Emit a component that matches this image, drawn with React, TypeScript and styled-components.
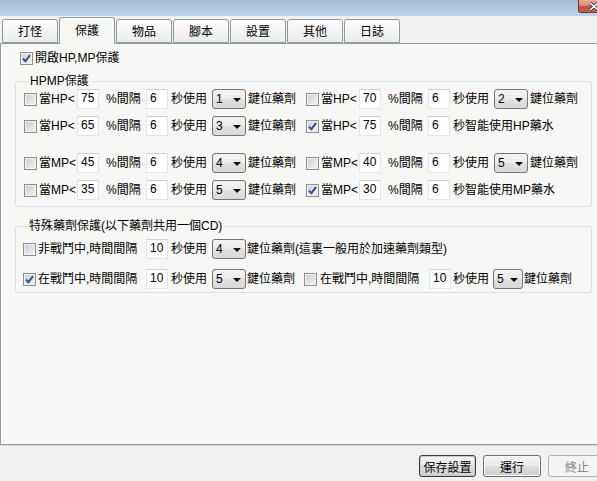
import React from "react";
import styled, { createGlobalStyle } from "styled-components";

const GlobalStyle = createGlobalStyle`
  html, body {
    margin: 0;
    padding: 0;
    background: #f0f0f0;
  }
  body {
    width: 597px;
    height: 481px;
    overflow: hidden;
    font-family: "Liberation Sans", "Noto Sans CJK TC", sans-serif;
    font-size: 12px;
    color: #000;
  }
`;

type Threshold = {
  label: string;
  pct: string;
  sec: string;
  slot?: string;
  smart?: string;
  checked?: boolean;
};

const tabs = ["打怪", "保護", "物品", "腳本", "設置", "其他", "日誌"];

const hpRows: Threshold[][] = [
  [
    { label: "當HP<", pct: "75", sec: "6", slot: "1" },
    { label: "當HP<", pct: "70", sec: "6", slot: "2" },
  ],
  [
    { label: "當HP<", pct: "65", sec: "6", slot: "3" },
    { label: "當HP<", pct: "75", sec: "6", smart: "秒智能使用HP藥水", checked: true },
  ],
];

const mpRows: Threshold[][] = [
  [
    { label: "當MP<", pct: "45", sec: "6", slot: "4" },
    { label: "當MP<", pct: "40", sec: "6", slot: "5" },
  ],
  [
    { label: "當MP<", pct: "35", sec: "6", slot: "5" },
    { label: "當MP<", pct: "30", sec: "6", smart: "秒智能使用MP藥水", checked: true },
  ],
];

const CheckMark = () => (
  <svg width="9" height="9" viewBox="0 0 9 9">
    <path d="M1 4.6 L3.4 7.2 L8 1.2" fill="none" stroke="#2c4f96" strokeWidth="1.9" />
  </svg>
);

const Check = ({ checked }: { checked?: boolean }) => (
  <CheckBox>{checked && <CheckMark />}</CheckBox>
);

const Combo = ({ value, w }: { value: string; w?: number }) => (
  <ComboBox $w={w}>
    <span>{value}</span>
    <Arrow />
  </ComboBox>
);

const ThresholdHalf = ({ row }: { row: Threshold }) => (
  <Half $w={282}>
    <Check checked={row.checked} />
    <Text $w={39} $pl={1}>{row.label}</Text>
    <NumBox readOnly value={row.pct} />
    <Text $w={47} $pl={7}>%間隔</Text>
    <NumBox readOnly value={row.sec} />
    {row.smart ? (
      <Text $pl={3}>{row.smart}</Text>
    ) : (
      <>
        <Text $w={44} $pl={3}>秒使用</Text>
        <Combo value={row.slot ?? ""} />
        <Text $pl={2}>鍵位藥劑</Text>
      </>
    )}
  </Half>
);

const App = () => {
  return (
    <Window>
      <GlobalStyle />
      <TitleBar>
        <CloseButton>
          <svg width="12" height="9" viewBox="0 0 12 9">
            <path d="M2 1 L10 8 M10 1 L2 8" stroke="#3d2a2a" strokeWidth="3.2" />
            <path d="M2 1 L10 8 M10 1 L2 8" stroke="#ffffff" strokeWidth="1.6" />
          </svg>
        </CloseButton>
      </TitleBar>

      <TabStrip>
        {tabs.map((t) => (
          <Tab key={t} $active={t === "保護"}>
            {t}
          </Tab>
        ))}
      </TabStrip>

      <Panel>
        <TopRow>
          <Check checked />
          <Text $pl={1}>開啟HP,MP保護</Text>
        </TopRow>

        <Group $mt={9} $pad="1px 0 6px 8px">
          <Legend>HPMP保護</Legend>
          <Stack $gap={7}>
            {hpRows.map((r, i) => (
              <Row key={i}>
                <ThresholdHalf row={r[0]} />
                <ThresholdHalf row={r[1]} />
              </Row>
            ))}
          </Stack>
          <Stack $gap={7} $mt={17}>
            {mpRows.map((r, i) => (
              <Row key={i}>
                <ThresholdHalf row={r[0]} />
                <ThresholdHalf row={r[1]} />
              </Row>
            ))}
          </Stack>
        </Group>

        <Group $mt={12} $pad="6px 0 3px 7px">
          <Legend>特殊藥劑保護(以下藥劑共用一個CD)</Legend>
          <Stack $gap={10}>
            <Row>
              <Half>
                <Check />
                <Text $w={109} $pl={1}>非戰鬥中,時間間隔</Text>
                <NumBox readOnly value="10" />
                <Text $w={44} $pl={3}>秒使用</Text>
                <Combo value="4" />
                <Text $pl={1}>鍵位藥劑(這裏一般用於加速藥劑類型)</Text>
              </Half>
            </Row>
            <Row>
              <Half $w={281}>
                <Check checked />
                <Text $w={109} $pl={1}>在戰鬥中,時間間隔</Text>
                <NumBox readOnly value="10" />
                <Text $w={44} $pl={3}>秒使用</Text>
                <Combo value="5" />
                <Text $pl={1}>鍵位藥劑</Text>
              </Half>
              <Half>
                <Check />
                <Text $w={111} $pl={2}>在戰鬥中,時間間隔</Text>
                <NumBox readOnly value="10" />
                <Text $w={42} $pl={2}>秒使用</Text>
                <Combo value="5" w={30} />
                <Text $pl={1}>鍵位藥劑</Text>
              </Half>
            </Row>
          </Stack>
        </Group>
      </Panel>

      <Footer>
        <Button $w={57} $focused>保存設置</Button>
        <Button $w={58}>運行</Button>
        <Button $w={58} disabled>
          終止
        </Button>
      </Footer>
    </Window>
  );
};

const Window = styled.div`
  width: 597px;
  height: 481px;
  display: flex;
  flex-direction: column;
  overflow: hidden;
  background: #f0f0f0;
`;

const TitleBar = styled.div`
  flex: none;
  height: 16px;
  display: flex;
  justify-content: flex-end;
  align-items: flex-start;
  background: linear-gradient(to bottom, #a2bad6, #bfd4ec);
`;

const CloseButton = styled.div`
  flex: none;
  width: 32px;
  height: 13px;
  margin-right: -13px;
  box-sizing: border-box;
  padding: 0 0 0 9px;
  display: flex;
  align-items: center;
  border: 1px solid #6e3a33;
  border-top: none;
  border-radius: 0 0 0 3px;
  background: linear-gradient(
    to bottom,
    #e7ab9c 0%,
    #d98d7b 45%,
    #c4533d 50%,
    #cc5d47 100%
  );
`;

const TabStrip = styled.div`
  flex: none;
  height: 27px;
  display: flex;
  align-items: flex-end;
  gap: 1px;
  padding-left: 2px;
  position: relative;
  z-index: 1;
`;

const Tab = styled.div<{ $active?: boolean }>`
  flex: none;
  width: 56px;
  height: ${(p) => (p.$active ? 27 : 24)}px;
  margin-bottom: ${(p) => (p.$active ? -1 : 0)}px;
  box-sizing: border-box;
  display: flex;
  align-items: center;
  justify-content: center;
  padding-bottom: ${(p) => (p.$active ? 2 : 0)}px;
  border: 1px solid #8d9ca1;
  border-bottom: ${(p) => (p.$active ? "none" : "1px solid #8d9ca1")};
  border-radius: 3px 3px 0 0;
  background: ${(p) =>
    p.$active ? "#f7f7f5" : "linear-gradient(to bottom, #fcfcfc, #ebebeb)"};
  font-family: "Noto Sans CJK TC", sans-serif;
  font-size: 12px;
  line-height: 14px;
`;

const Panel = styled.div`
  flex: none;
  height: 402px;
  box-sizing: border-box;
  padding: 7px 5px 0 14px;
  border-top: 1px solid #8d9ca1;
  border-left: 1px solid #8d9ca1;
  border-bottom: 1px solid #8d9ca1;
  background: #f7f7f5;
  box-shadow: 0 1px 0 #d8d8d8;
`;

const TopRow = styled.div`
  display: flex;
  align-items: center;
  height: 14px;
  margin-left: 5px;
`;

const Group = styled.fieldset<{ $mt: number; $pad: string }>`
  margin: ${(p) => p.$mt}px 0 0;
  padding: ${(p) => p.$pad};
  min-inline-size: 0;
  border: 1px solid #d5dfe5;
  border-radius: 3px;
`;

const Legend = styled.legend`
  margin-left: 4px;
  padding: 0 2px;
  line-height: 14px;
  font-size: 12px;
`;

const Stack = styled.div<{ $gap: number; $mt?: number }>`
  display: flex;
  flex-direction: column;
  gap: ${(p) => p.$gap}px;
  margin-top: ${(p) => p.$mt ?? 0}px;
`;

const Row = styled.div`
  display: flex;
  height: 20px;
`;

const Half = styled.div<{ $w?: number }>`
  flex: none;
  width: ${(p) => (p.$w ? `${p.$w}px` : "auto")};
  display: flex;
  align-items: center;
  white-space: nowrap;
`;

const CheckBox = styled.span`
  flex: none;
  width: 13px;
  height: 13px;
  margin-right: 1px;
  box-sizing: border-box;
  display: inline-flex;
  align-items: center;
  justify-content: center;
  border: 1px solid #8e8f8f;
  background: linear-gradient(135deg, #c9ccd1, #f4f4f4);
  box-shadow: inset 0 0 0 1px #f1f1f1;
`;

const Text = styled.span<{ $w?: number; $pl?: number }>`
  flex: none;
  width: ${(p) => (p.$w ? `${p.$w}px` : "auto")};
  padding-left: ${(p) => p.$pl ?? 0}px;
  box-sizing: border-box;
  line-height: 14px;
  white-space: nowrap;
`;

const NumBox = styled.input`
  flex: none;
  width: 22px;
  height: 20px;
  margin: 0;
  padding: 0 0 2px 3px;
  box-sizing: border-box;
  border: 1px solid #e2e6eb;
  border-top-color: #cdd1d7;
  background: #fff;
  color: #000;
  font-family: "Liberation Sans", sans-serif;
  font-size: 12px;
  outline: none;
`;

const ComboBox = styled.div<{ $w?: number }>`
  flex: none;
  width: ${(p) => p.$w ?? 34}px;
  height: 20px;
  box-sizing: border-box;
  display: flex;
  align-items: center;
  justify-content: space-between;
  padding: 0 4px 1px 3px;
  border: 1px solid #747474;
  border-radius: 3px;
  background: linear-gradient(to bottom, #f3f3f3 0%, #ebebeb 50%, #e0e0e0 51%, #d9d9d9 100%);
  font-family: "Liberation Sans", sans-serif;
  font-size: 12px;
`;

const Arrow = styled.span`
  width: 0;
  height: 0;
  margin-top: 2px;
  border-left: 4px solid transparent;
  border-right: 4px solid transparent;
  border-top: 4px solid #111;
`;

const Footer = styled.div`
  flex: none;
  display: flex;
  justify-content: flex-end;
  gap: 7px;
  padding-top: 10px;
  margin-right: -9px;
`;

const Button = styled.button<{ $w: number; $focused?: boolean }>`
  flex: none;
  width: ${(p) => p.$w}px;
  height: 22px;
  margin: 0;
  padding: 0;
  box-sizing: border-box;
  border: 1px solid ${(p) => (p.$focused ? "#3c3c3c" : "#707070")};
  border-radius: 3px;
  background: linear-gradient(to bottom, #f2f2f2 0%, #ebebeb 50%, #dddddd 51%, #cfcfcf 100%);
  box-shadow: ${(p) => (p.$focused ? "inset 0 0 0 1px #c9c9c9" : "inset 0 0 0 1px #f8f8f8")};
  color: #000;
  font-family: "Noto Sans CJK TC", sans-serif;
  font-size: 12px;

  &:disabled {
    border-color: #adb2b5;
    background: #f4f4f4;
    box-shadow: none;
    color: #838383;
  }
`;

export default App;
